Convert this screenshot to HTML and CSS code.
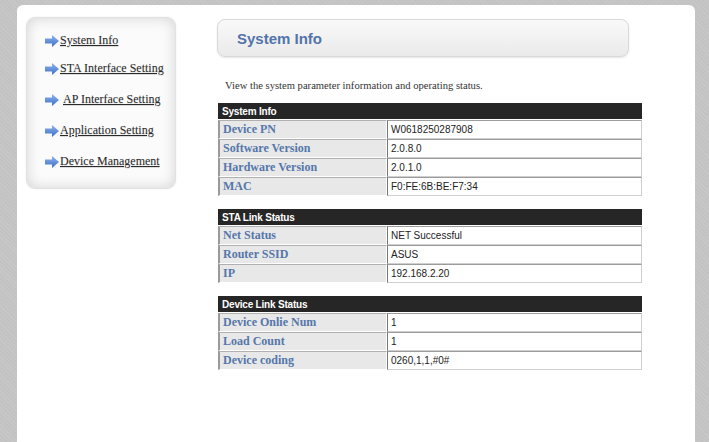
FILE: index.html
```html
<!DOCTYPE html>
<html>
<head>
<meta charset="utf-8">
<title>System Info</title>
<link rel="stylesheet" href="styles.css">
</head>
<body>
<div class="page">
  <aside class="sidebar">
    <ul class="nav">
      <li><span class="arrow"><svg width="14" height="12" viewBox="0 0 14 12"><defs><linearGradient id="g" x1="0" y1="0" x2="0" y2="1"><stop offset="0" stop-color="#8fb4ee"/><stop offset="1" stop-color="#3d6fc8"/></linearGradient></defs><path d="M0 3.5H7V0L14 6L7 12V8.5H0Z" fill="url(#g)"/></svg></span><a href="#">System Info</a></li>
      <li><span class="arrow"><svg width="14" height="12" viewBox="0 0 14 12"><path d="M0 3.5H7V0L14 6L7 12V8.5H0Z" fill="url(#g)"/></svg></span><a href="#">STA Interface Setting</a></li>
      <li><span class="arrow"><svg width="14" height="12" viewBox="0 0 14 12"><path d="M0 3.5H7V0L14 6L7 12V8.5H0Z" fill="url(#g)"/></svg></span><a href="#" class="ap">AP Interface Setting</a></li>
      <li><span class="arrow"><svg width="14" height="12" viewBox="0 0 14 12"><path d="M0 3.5H7V0L14 6L7 12V8.5H0Z" fill="url(#g)"/></svg></span><a href="#">Application Setting</a></li>
      <li><span class="arrow"><svg width="14" height="12" viewBox="0 0 14 12"><path d="M0 3.5H7V0L14 6L7 12V8.5H0Z" fill="url(#g)"/></svg></span><a href="#">Device Management</a></li>
    </ul>
  </aside>
  <main class="main">
    <div class="title-box"><h1>System Info</h1></div>
    <p class="desc">View the system parameter information and operating status.</p>

    <table class="info">
      <colgroup><col class="c-lbl"><col class="c-val"></colgroup>
      <tr><th colspan="2">System Info</th></tr>
      <tr><td class="lbl">Device PN</td><td class="val">W0618250287908</td></tr>
      <tr><td class="lbl">Software Version</td><td class="val">2.0.8.0</td></tr>
      <tr><td class="lbl">Hardware Version</td><td class="val">2.0.1.0</td></tr>
      <tr><td class="lbl">MAC</td><td class="val">F0:FE:6B:BE:F7:34</td></tr>
    </table>

    <table class="info">
      <colgroup><col class="c-lbl"><col class="c-val"></colgroup>
      <tr><th colspan="2">STA Link Status</th></tr>
      <tr><td class="lbl">Net Status</td><td class="val">NET Successful</td></tr>
      <tr><td class="lbl">Router SSID</td><td class="val">ASUS</td></tr>
      <tr><td class="lbl">IP</td><td class="val">192.168.2.20</td></tr>
    </table>

    <table class="info">
      <colgroup><col class="c-lbl"><col class="c-val"></colgroup>
      <tr><th colspan="2">Device Link Status</th></tr>
      <tr><td class="lbl">Device Onlie Num</td><td class="val">1</td></tr>
      <tr><td class="lbl">Load Count</td><td class="val">1</td></tr>
      <tr><td class="lbl">Device coding</td><td class="val">0260,1,1,#0#</td></tr>
    </table>
  </main>
</div>
</body>
</html>
```
FILE: styles.css
```css
html, body {
  margin: 0;
  padding: 0;
}
body {
  background-color: #c3c3c3;
  background-image: repeating-linear-gradient(45deg, rgba(255,255,255,0.08) 0 1px, transparent 1px 3px);
  height: 442px;
  overflow: hidden;
}
.page {
  margin: 5px 0 0 17px;
  width: 678px;
  height: 437px;
  background: #fff;
  border-radius: 6px 6px 0 0;
  display: flex;
  align-items: flex-start;
}
.sidebar {
  margin: 12px 0 0 9px;
  width: 150px;
  height: 172px;
  box-sizing: border-box;
  border: 1px solid #e2e2e2;
  border-radius: 9px;
  background: #fbfbfb;
  box-shadow: inset 0 0 14px rgba(0,0,0,0.16), 0 0 2px rgba(0,0,0,0.08);
}
.nav {
  list-style: none;
  margin: 0;
  padding: 10px 0 0 18px;
}
.nav li {
  height: 31px;
  display: flex;
  align-items: center;
}
.nav li:first-child {
  height: 25px;
}
.arrow {
  width: 15px;
  height: 12px;
  display: flex;
}
.nav a {
  font-family: "Liberation Serif", "Times New Roman", serif;
  font-size: 12px;
  color: #2a2a2a;
  text-decoration: underline;
  text-shadow: 0 1px 1px rgba(0,0,0,0.12);
}
.nav a.ap {
  margin-left: 3px;
}
.main {
  margin: 14px 0 0 41px;
  width: 424px;
}
.title-box {
  width: 412px;
  height: 38px;
  box-sizing: border-box;
  border: 1px solid #d9d9d9;
  border-radius: 8px;
  background: linear-gradient(#f9f9f9, #eaeaea);
  box-shadow: 0 1px 2px rgba(0,0,0,0.10);
  display: flex;
  align-items: center;
  padding-left: 19px;
}
.title-box h1 {
  margin: 0;
  font-family: "Liberation Sans", Arial, sans-serif;
  font-size: 15px;
  font-weight: bold;
  color: #5274aa;
}
.desc {
  margin: 22px 0 10px 8px;
  font-family: "Liberation Serif", "Times New Roman", serif;
  font-size: 10.6px;
  color: #333;
  line-height: 14px;
}
.info {
  width: 424px;
  border-collapse: separate;
  border-spacing: 0;
  margin: 0 0 13px 1px;
  table-layout: fixed;
}
.c-lbl {
  width: 169px;
}
.info th {
  height: 17px;
  padding: 0 0 0 4px;
  box-sizing: border-box;
  background: #262626;
  color: #fff;
  text-align: left;
  font-family: "Liberation Sans", Arial, sans-serif;
  font-size: 10px;
  letter-spacing: -0.2px;
  font-weight: bold;
  border-bottom: 1px solid #fff;
}
.info td {
  height: 19px;
  padding: 0 0 0 3px;
  border: 1px solid;
  box-sizing: border-box;
}
.info td.lbl {
  background: #e8e8e8;
  border-color: #b0b0b0 #ffffff #ffffff #9a9a9a;
  border-left-width: 2px;
  font-family: "Liberation Serif", "Times New Roman", serif;
  font-weight: bold;
  font-size: 12px;
  color: #5577aa;
}
.info td.val {
  background: #fff;
  border-color: #9c9c9c #cfcfcf #cfcfcf #777;
  font-family: "Liberation Sans", Arial, sans-serif;
  font-size: 10px;
  color: #222;
}
```
